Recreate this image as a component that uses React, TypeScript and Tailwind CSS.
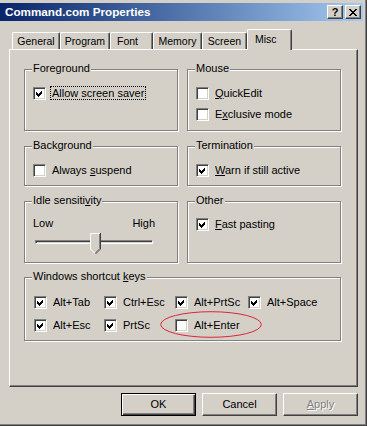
import React from "react";

const face = "bg-[#d4d0c8]";

function Check({ checked = false }: { checked?: boolean }) {
  return (
    <span className="relative block h-[13px] w-[13px] shrink-0 border border-t-[#808080] border-l-[#808080] border-r-white border-b-white bg-white shadow-[inset_1px_1px_0_#404040,inset_-1px_-1px_0_#d4d0c8]">
      {checked && (
        <svg className="absolute left-0 top-0" width="11" height="11" viewBox="0 0 11 11" shapeRendering="crispEdges">
          <polygon points="2,4 4,6 8,2 8,5 4,9 2,7" fill="#000" />
        </svg>
      )}
    </span>
  );
}

function CheckRow({
  checked,
  children,
  focus = false,
}: {
  checked?: boolean;
  children: React.ReactNode;
  focus?: boolean;
}) {
  return (
    <div className="flex items-center gap-[4px]">
      <Check checked={checked} />
      <span
        className={
          focus
            ? "border border-dotted border-black px-[1px] leading-[12px] whitespace-nowrap"
            : "border border-transparent px-[1px] leading-[12px] whitespace-nowrap"
        }
      >
        {children}
      </span>
    </div>
  );
}

function Group({
  title,
  className,
  children,
}: {
  title: React.ReactNode;
  className: string;
  children?: React.ReactNode;
}) {
  return (
    <div
      className={`relative border border-[#808080] shadow-[inset_1px_1px_0_#fff,1px_1px_0_#fff] ${className}`}
    >
      <span className="absolute -top-[8px] left-[7px] bg-[#d4d0c8] px-[1px] leading-[13px] whitespace-nowrap">
        {title}
      </span>
      {children}
    </div>
  );
}

function Button({
  children,
  isDefault = false,
  disabled = false,
}: {
  children: React.ReactNode;
  isDefault?: boolean;
  disabled?: boolean;
}) {
  const frame = isDefault
    ? "border border-black shadow-[inset_1px_1px_0_#fff,inset_-1px_-1px_0_#404040,inset_-2px_-2px_0_#808080]"
    : "border border-t-white border-l-white border-r-[#404040] border-b-[#404040] shadow-[inset_-1px_-1px_0_#808080]";
  return (
    <div
      className={`flex h-[23px] w-[75px] items-center justify-center ${face} ${frame} ${
        disabled ? "text-[#808080] [text-shadow:1px_1px_0_#fff]" : "text-black"
      }`}
    >
      {children}
    </div>
  );
}

const tabs = [
  { label: "General", cls: "w-[48px] justify-center" },
  { label: "Program", cls: "w-[50px] justify-center" },
  { label: "Font", cls: "w-[43px] pl-[6px]" },
  { label: "Memory", cls: "w-[49px] justify-center" },
  { label: "Screen", cls: "w-[45px] justify-center" },
];

function TitleButton({ children }: { children: React.ReactNode }) {
  return (
    <div className="flex h-[14px] w-[16px] items-center justify-center border border-t-white border-l-white border-r-[#404040] border-b-[#404040] bg-[#d4d0c8] shadow-[inset_-1px_-1px_0_#808080]">
      {children}
    </div>
  );
}

export default function App() {
  return (
    <div className="relative h-[426px] w-[367px] overflow-hidden border-r border-b border-[#404040] bg-[#d4d0c8] pt-[3px] pr-[3px] font-['Liberation_Sans',Arial,sans-serif] text-[11px] text-black shadow-[inset_-1px_-1px_0_#808080]">
      {/* Title bar */}
      <div className="flex h-[18px] items-center justify-between bg-gradient-to-r from-[#0a246a] to-[#a6caf0] pl-[5px] pr-[2px]">
        <span className="text-[11.7px] font-bold leading-none text-white">Command.com Properties</span>
        <div className="flex gap-[2px]">
          <TitleButton>
            <span className="text-[11px] font-bold leading-none">?</span>
          </TitleButton>
          <TitleButton>
            <svg width="8" height="7" viewBox="0 0 8 7" shapeRendering="crispEdges">
              <path d="M0 0h2v1h-2zM6 0h2v1h-2zM1 1h2v1h-2zM5 1h2v1h-2zM2 2h4v1h-4zM3 3h2v1h-2zM2 4h4v1h-4zM1 5h2v1h-2zM5 5h2v1h-2zM0 6h2v1h-2zM6 6h2v1h-2z" fill="#000" />
            </svg>
          </TitleButton>
        </div>
      </div>

      <div className="ml-[9px] w-[349px]">
        {/* Tabs */}
        <div className="mt-[8px] flex h-[20px] items-end pl-[3px]">
          {tabs.map((t) => (
            <div
              key={t.label}
              className={`flex h-[17px] items-center whitespace-nowrap rounded-t-[2px] border-l border-t border-r border-l-white border-t-white border-r-[#404040] shadow-[inset_-1px_0_0_#808080] text-[10.5px] leading-[13px] ${t.cls}`}
            >
              {t.label}
            </div>
          ))}
          <div className="relative z-10 -mb-px flex h-[21px] w-[45px] items-start rounded-t-[2px] border-l border-t border-r border-l-white border-t-white border-r-[#404040] bg-[#d4d0c8] pt-[3px] pl-[7px] text-[10.5px] leading-[13px] shadow-[inset_-1px_0_0_#808080]">
            Misc
          </div>
        </div>

        {/* Panel */}
        <div className="h-[338px] border border-t-white border-l-white border-r-[#404040] border-b-[#404040] pt-[19px] pl-[14px] shadow-[inset_-1px_-1px_0_#808080]">
          <div className="grid grid-cols-[154px_154px] gap-x-[9px] gap-y-[15px]">
            <Group title="Foreground" className="h-[62px] pt-[16px] pl-[8px]">
              <CheckRow checked focus>
                Allow screen saver
              </CheckRow>
            </Group>
            <Group title="Mouse" className="flex h-[62px] flex-col gap-[7px] pt-[16px] pl-[8px]">
              <CheckRow>
                <u>Q</u>uickEdit
              </CheckRow>
              <CheckRow>
                E<u>x</u>clusive mode
              </CheckRow>
            </Group>

            <Group title="Background" className="h-[40px] pt-[16px] pl-[8px]">
              <CheckRow>
                Always <u>s</u>uspend
              </CheckRow>
            </Group>
            <Group title="Termination" className="h-[40px] pt-[16px] pl-[8px]">
              <CheckRow checked>
                <u>W</u>arn if still active
              </CheckRow>
            </Group>

            <Group
              title={
                <>
                  Idle sensiti<u>v</u>ity
                </>
              }
              className="h-[62px] pt-[15px] pl-[8px] pr-[22px]"
            >
              <div className="flex justify-between leading-[13px]">
                <span>Low</span>
                <span>High</span>
              </div>
              <div className="relative ml-[2px] mt-[3px] h-[21px] w-[118px] pt-[7px]">
                <div className="h-[4px] border border-t-[#808080] border-l-[#808080] border-r-white border-b-white bg-[#d4d0c8] shadow-[inset_1px_1px_0_#404040]" />
                <svg className="absolute left-[55px] top-0" width="11" height="21" viewBox="0 0 11 21">
                  <polygon points="0,0 11,0 11,16 5.5,21 0,16" fill="#d4d0c8" />
                  <path d="M0.5 16 V0.5 H10" stroke="#fff" fill="none" />
                  <path d="M0.5 16 L5.5 21" stroke="#fff" fill="none" />
                  <path d="M10.5 0 V16 L5.5 21" stroke="#404040" fill="none" />
                  <path d="M9.5 1 V15.6 L5.5 19.6" stroke="#808080" fill="none" />
                </svg>
              </div>
            </Group>
            <Group title="Other" className="h-[62px] pt-[15px] pl-[8px]">
              <CheckRow checked>
                <u>F</u>ast pasting
              </CheckRow>
            </Group>
          </div>

          <Group
            title={
              <>
                Windows shortcut <u>k</u>eys
              </>
            }
            className="mt-[14px] h-[64px] w-[317px] pt-[17px] pl-[9px]"
          >
            <div className="grid grid-cols-[70px_71px_73px_auto] gap-y-[9px]">
              <CheckRow checked>Alt+Tab</CheckRow>
              <CheckRow checked>Ctrl+Esc</CheckRow>
              <CheckRow checked>Alt+PrtSc</CheckRow>
              <CheckRow checked>Alt+Space</CheckRow>
              <CheckRow checked>Alt+Esc</CheckRow>
              <CheckRow checked>PrtSc</CheckRow>
              <CheckRow>Alt+Enter</CheckRow>
            </div>
          </Group>
        </div>

        {/* Buttons */}
        <div className="mt-[6px] flex justify-end gap-[6px]">
          <Button isDefault>OK</Button>
          <Button>Cancel</Button>
          <Button disabled>
            <span>
              <u>A</u>pply
            </span>
          </Button>
        </div>
      </div>

      {/* Red annotation ellipse */}
      <svg className="pointer-events-none absolute left-[160px] top-[311px]" width="102" height="27" viewBox="0 0 102 27">
        <ellipse cx="51" cy="13.5" rx="50.3" ry="12.8" fill="none" stroke="#d8263a" strokeWidth="1" />
      </svg>
    </div>
  );
}
